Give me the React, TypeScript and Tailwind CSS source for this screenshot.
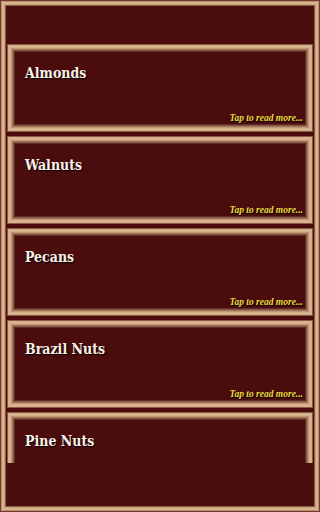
const nuts = ["Almonds", "Walnuts", "Pecans", "Brazil Nuts", "Pine Nuts"]

const NutCard = ({name}: {name: string}) => {
    return (
        <div className="mx-px h-[88px] shrink-0 flex flex-col justify-between bg-[#4a0c0c] pt-[19px] pb-[7px] pl-[18px] pr-[10px] shadow-[inset_0_0_0_1px_#8c5c46,inset_0_0_0_2px_#d2ab82,inset_0_0_0_3px_#dcb890,inset_0_0_0_4px_#d4ae86,inset_0_0_0_5px_#c09672,inset_0_0_0_6px_#a2765c,inset_0_0_0_7px_#825246,inset_0_0_0_8px_#642c28]">
            <h3 className="self-start text-[14px] leading-5 font-bold text-[#f5f0e8] font-['DejaVu_Serif_Condensed','DejaVu_Serif',serif] [text-shadow:1px_1px_1px_#000]">{name}</h3>
            <p className="self-end text-[9.5px] leading-[13px] italic font-bold text-[#f0da3c] font-['Liberation_Serif',serif] [text-shadow:1px_1px_1px_#000]">Tap to read more...</p>
        </div>
    )
}

export default function App() {
    return (
        <div className="w-[320px] h-[512px] flex flex-col bg-[#4a0c0c] p-[6px] shadow-[inset_0_0_0_1px_#6e3a30,inset_0_0_0_2px_#b88c6c,inset_0_0_0_3px_#d8b28a,inset_0_0_0_4px_#dcb890,inset_0_0_0_5px_#c89e78,inset_0_0_0_6px_#8e5e4a]">
            <div className="h-[38px] shrink-0" />
            <div className="flex-1 overflow-hidden flex flex-col gap-1">
                {nuts.map((n) => <NutCard key={n} name={n} />)}
            </div>
            <div className="h-[43px] shrink-0" />
        </div>
    )
}
